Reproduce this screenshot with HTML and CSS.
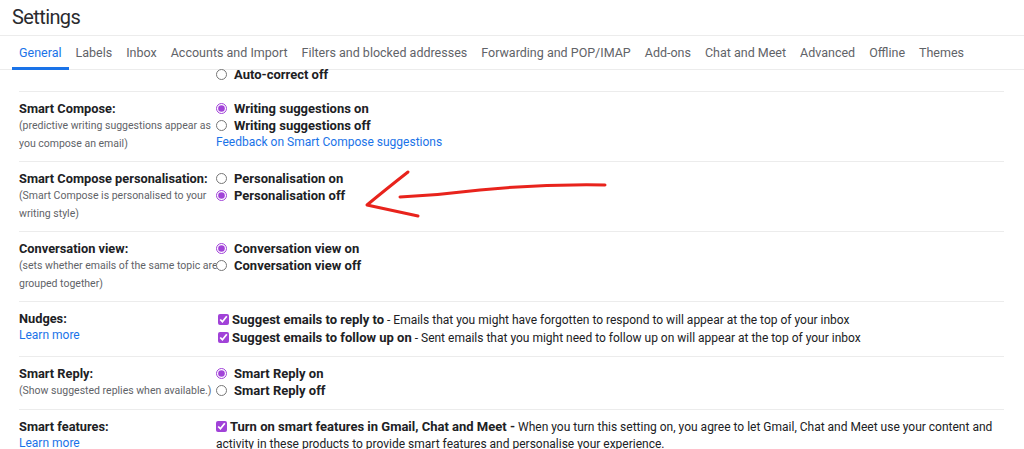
FILE: index.html
```html
<!DOCTYPE html>
<html lang="en">
<head>
<meta charset="utf-8">
<title>Settings</title>
<link rel="stylesheet" href="styles.css">
</head>
<body>
<header class="title-bar"><h1 class="title">Settings</h1></header>
<nav class="tabs">
  <span class="tab active">General</span>
  <span class="tab">Labels</span>
  <span class="tab">Inbox</span>
  <span class="tab">Accounts and Import</span>
  <span class="tab">Filters and blocked addresses</span>
  <span class="tab">Forwarding and POP/IMAP</span>
  <span class="tab">Add-ons</span>
  <span class="tab">Chat and Meet</span>
  <span class="tab">Advanced</span>
  <span class="tab">Offline</span>
  <span class="tab">Themes</span>
</nav>
<main class="content">
  <div class="scroller">
    <section class="row row-first">
      <div class="left"></div>
      <div class="right">
        <label class="opt"><input type="radio" name="ac"><span>Auto-correct off</span></label>
      </div>
    </section>

    <section class="row">
      <div class="left">
        <div class="label">Smart Compose:</div>
        <div class="desc">(predictive writing suggestions appear as</div>
        <div class="desc">you compose an email)</div>
      </div>
      <div class="right">
        <label class="opt"><input type="radio" name="sc" checked><span>Writing suggestions on</span></label>
        <label class="opt"><input type="radio" name="sc"><span>Writing suggestions off</span></label>
        <a class="link">Feedback on Smart Compose suggestions</a>
      </div>
    </section>

    <section class="row">
      <div class="left">
        <div class="label">Smart Compose personalisation:</div>
        <div class="desc">(Smart Compose is personalised to your</div>
        <div class="desc">writing style)</div>
      </div>
      <div class="right">
        <label class="opt"><input type="radio" name="sp"><span>Personalisation on</span></label>
        <label class="opt"><input type="radio" name="sp" checked><span>Personalisation off</span></label>
      </div>
    </section>

    <section class="row">
      <div class="left">
        <div class="label">Conversation view:</div>
        <div class="desc">(sets whether emails of the same topic are</div>
        <div class="desc">grouped together)</div>
      </div>
      <div class="right">
        <label class="opt"><input type="radio" name="cv" checked><span>Conversation view on</span></label>
        <label class="opt"><input type="radio" name="cv"><span>Conversation view off</span></label>
      </div>
    </section>

    <section class="row">
      <div class="left">
        <div class="label">Nudges:</div>
        <a class="link">Learn more</a>
      </div>
      <div class="right">
        <label class="chk"><input type="checkbox" checked><span><b>Suggest emails to reply to</b> - Emails that you might have forgotten to respond to will appear at the top of your inbox</span></label>
        <label class="chk"><input type="checkbox" checked><span><b>Suggest emails to follow up on</b> - Sent emails that you might need to follow up on will appear at the top of your inbox</span></label>
      </div>
    </section>

    <section class="row">
      <div class="left">
        <div class="label">Smart Reply:</div>
        <div class="desc">(Show suggested replies when available.)</div>
      </div>
      <div class="right">
        <label class="opt"><input type="radio" name="sr" checked><span>Smart Reply on</span></label>
        <label class="opt"><input type="radio" name="sr"><span>Smart Reply off</span></label>
      </div>
    </section>

    <section class="row">
      <div class="left">
        <div class="label">Smart features:</div>
        <a class="link">Learn more</a>
      </div>
      <div class="right">
        <p class="flow"><input type="checkbox" checked><b>Turn on smart features in Gmail, Chat and Meet -</b> <span class="nw">When you turn this setting on, you agree to let Gmail, Chat and Meet use your content and</span><br><span class="nw">activity in these products to provide smart features and personalise your experience.</span></p>
      </div>
    </section>
  </div>
</main>

<svg class="arrow" width="1024" height="449" viewBox="0 0 1024 449" aria-hidden="true">
  <path d="M605,185 Q540,184 480,190 Q440,195 400,197" />
  <path d="M408,172 Q385,190 367,205 Q390,210 418,216" />
</svg>
</body>
</html>
```
FILE: styles.css
```css
html, body {
  margin: 0;
  padding: 0;
  background: #fff;
  font-family: Roboto, "Liberation Sans", Arial, sans-serif;
  color: #202124;
  height: 449px;
  overflow: hidden;
}

.title-bar {
  height: 35px;
  border-bottom: 1px solid #ececec;
  padding-left: 12px;
}

.title {
  margin: 0;
  font-weight: 400;
  font-size: 20px;
  line-height: 35px;
  letter-spacing: -0.6px;
  color: #2a2b2e;
}

.tabs {
  display: flex;
  height: 34px;
  padding-left: 12px;
  box-shadow: inset 0 -1px 0 #ececec;
}

.tab {
  padding: 0 7px;
  font-size: 12.5px;
  line-height: 33px;
  color: #5f6368;
  white-space: nowrap;
}

.tab.active {
  color: #1a73e8;
  box-shadow: inset 0 -3px 0 #1a73e8;
}

.scroller {
  margin-top: -4px;
}

.row {
  display: grid;
  grid-template-columns: 197px 1fr;
  margin: 0 20px 0 19px;
  padding: 8px 0 9px;
  border-bottom: 1px solid #ececec;
}

.row-first {
  padding: 0 0 8px;
}

.label {
  font-weight: 700;
  font-size: 12.8px;
  line-height: 17px;
  white-space: nowrap;
}

.desc {
  font-size: 10.5px;
  line-height: 17.5px;
  color: #5f6368;
  white-space: nowrap;
}

.link {
  display: block;
  font-size: 12px;
  line-height: 17px;
  color: #1a73e8;
  white-space: nowrap;
}

.opt {
  display: flex;
  align-items: center;
  height: 17px;
  font-weight: 700;
  font-size: 13px;
  white-space: nowrap;
}

.opt input {
  width: 11px;
  height: 11px;
  margin: 0 7px 0 0;
  accent-color: #a142d8;
}

.chk {
  display: flex;
  align-items: center;
  height: 18.5px;
  font-size: 12px;
  white-space: nowrap;
}

.chk b {
  font-size: 13px;
}

.chk input {
  width: 11px;
  height: 11px;
  margin: 0 3px 0 2px;
  accent-color: #a142d8;
}

.flow {
  margin: 0;
  font-size: 12px;
  line-height: 17px;
}

.flow b {
  font-size: 13px;
}

.flow input {
  width: 11px;
  height: 11px;
  margin: 0 3px 0 0;
  vertical-align: -1px;
  accent-color: #a142d8;
}

.nw {
  white-space: nowrap;
}

.arrow {
  position: absolute;
  left: 0;
  top: 0;
  pointer-events: none;
}

.arrow path {
  fill: none;
  stroke: #e8231c;
  stroke-width: 3;
  stroke-linecap: round;
  stroke-linejoin: round;
}
```
